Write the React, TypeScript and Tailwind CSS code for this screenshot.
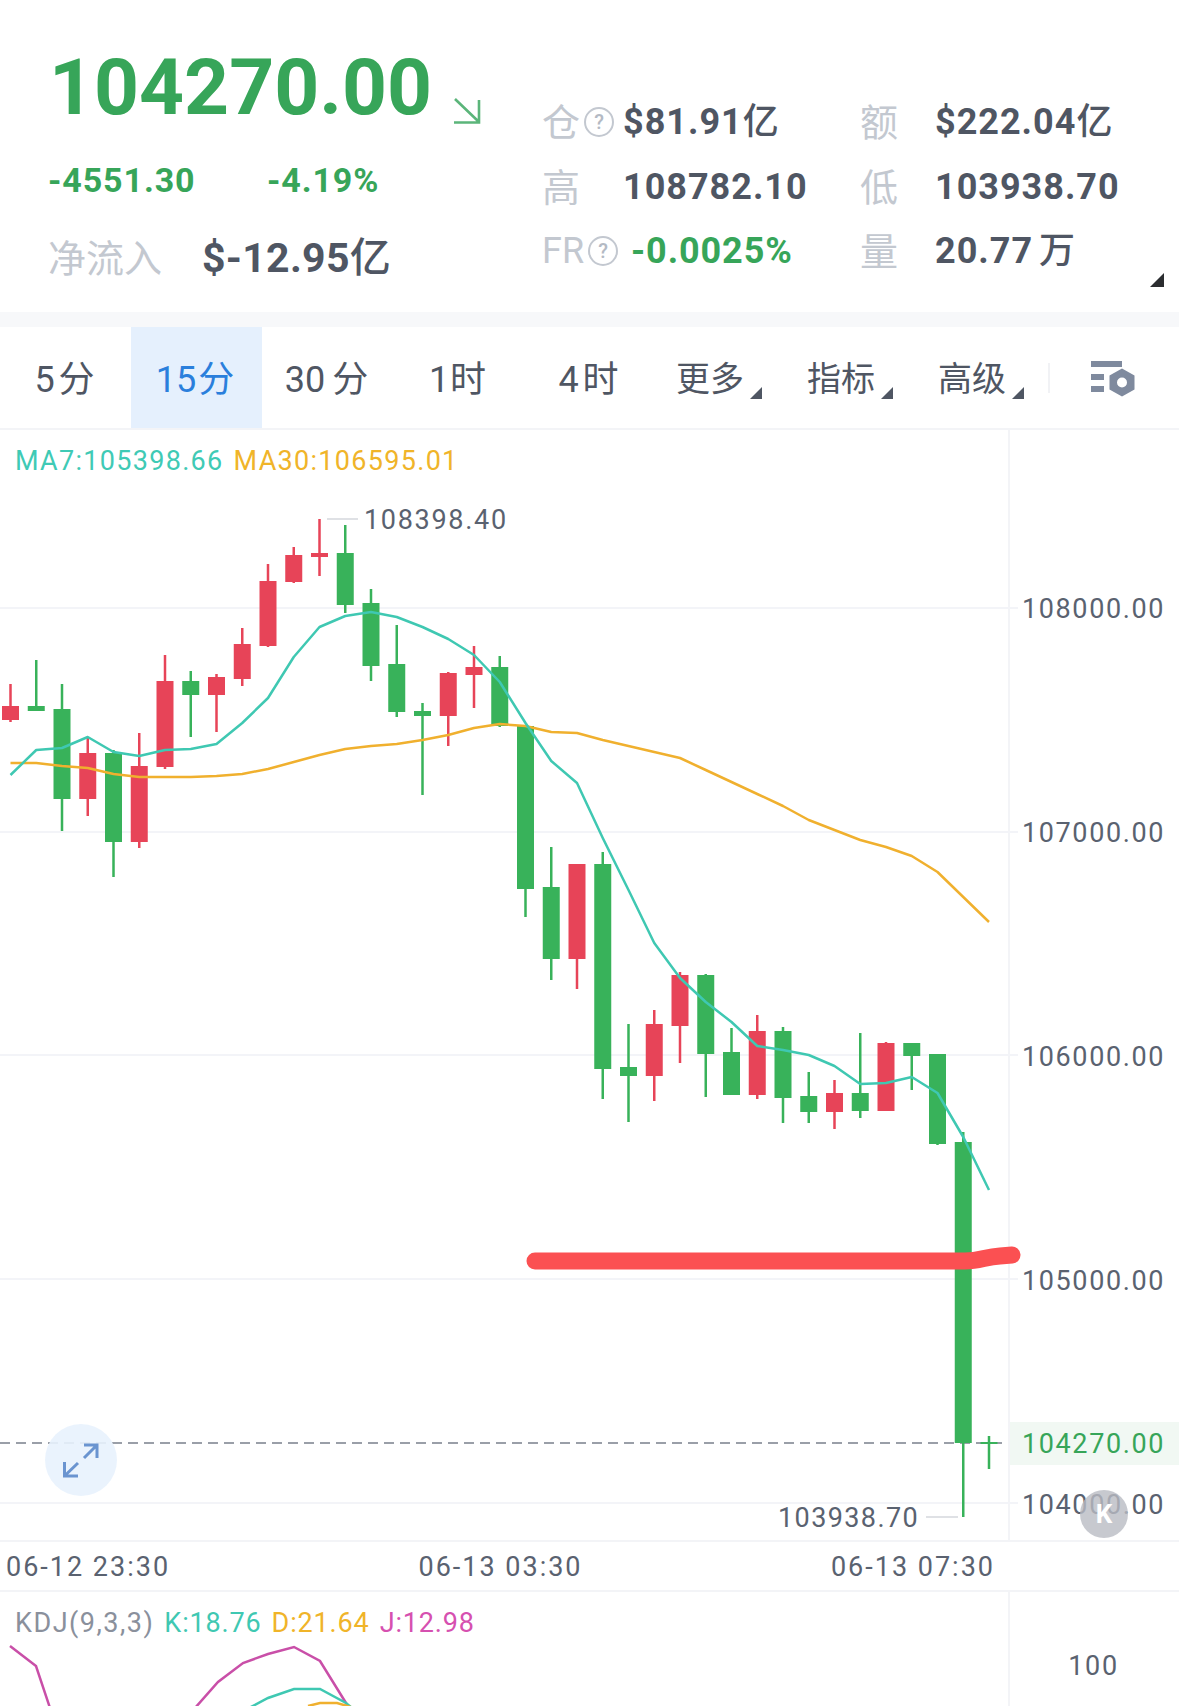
const GREEN = "#38b25a";
const RED = "#e74458";

// [wickTop, wickBottom, bodyTop, bodyBottom, up]
const CANDLES: [number, number, number, number, boolean][] = [
  [684, 722, 706, 720, true],
  [660, 711, 706, 711, false],
  [684, 831, 709, 799, false],
  [738, 816, 753, 799, true],
  [750, 877, 753, 842, false],
  [733, 848, 766, 842, true],
  [655, 769, 681, 767, true],
  [671, 737, 681, 695, false],
  [674, 732, 677, 695, true],
  [628, 686, 644, 679, true],
  [564, 647, 581, 646, true],
  [547, 583, 555, 582, true],
  [519, 576, 553, 557, true],
  [525, 613, 553, 605, false],
  [589, 681, 603, 666, false],
  [625, 717, 664, 712, false],
  [703, 795, 711, 716, false],
  [672, 746, 673, 716, true],
  [646, 708, 667, 675, true],
  [656, 727, 667, 726, false],
  [726, 917, 726, 889, false],
  [847, 980, 887, 959, false],
  [864, 989, 864, 959, true],
  [852, 1099, 864, 1069, false],
  [1024, 1122, 1067, 1076, false],
  [1010, 1101, 1024, 1076, true],
  [972, 1063, 975, 1026, true],
  [974, 1097, 975, 1054, false],
  [1028, 1095, 1052, 1095, false],
  [1015, 1099, 1031, 1095, true],
  [1027, 1123, 1031, 1098, false],
  [1072, 1123, 1096, 1112, false],
  [1080, 1129, 1093, 1112, true],
  [1033, 1118, 1093, 1111, false],
  [1042, 1111, 1043, 1111, true],
  [1043, 1090, 1043, 1056, false],
  [1054, 1145, 1054, 1144, false],
  [1132, 1517, 1142, 1443, false],
  [1436, 1469, 1442, 1444, false],
];

const MA7 = [
  775, 750, 748, 737, 752, 756, 750, 749, 744, 723, 698, 657, 627, 616, 612, 617, 627, 639, 655,
  682, 723, 761, 783, 838, 890, 943, 978, 1002, 1022, 1046, 1050, 1055, 1066, 1084, 1083, 1077,
  1093, 1137, 1190,
];
const MA30 = [
  763, 763, 766, 768, 774, 777, 777, 777, 776, 774, 769, 762, 755, 749, 746, 744, 740, 735, 728,
  724, 726, 732, 733, 740, 746, 752, 758, 770, 782, 794, 806, 820, 830, 840, 847, 856, 872, 897,
  922,
];

const candleX = (i: number) => 10.5 + 25.75 * i;
const linePoints = (ys: number[]) => ys.map((y, i) => `${candleX(i)},${y}`).join(" ");

const AXIS = ["108000.00", "107000.00", "106000.00", "105000.00", "104000.00"];
const GRID = [608, 832, 1055, 1279, 1503];
const TABS = [
  { n: "5", unit: "分", gap: "ml-[4px]" },
  { n: "15", unit: "分", gap: "ml-[2px]" },
  { n: "30", unit: "分", gap: "ml-[7px]" },
  { n: "1", unit: "时", gap: "ml-[1px]" },
  { n: "4", unit: "时", gap: "ml-[4px]" },
];
const MENUS = ["更多", "指标", "高级"];

function Help() {
  return (
    <span className="flex h-[30px] w-[30px] items-center justify-center rounded-full border-[2.5px] border-[#c3c8d0] text-[20px] font-medium text-[#b4bac4]">
      ?
    </span>
  );
}

function Label({ children }: { children: React.ReactNode }) {
  return <span className="pt-[2px] text-[38px] leading-none text-[#c3c8d0]">{children}</span>;
}

function Value({ children }: { children: React.ReactNode }) {
  return (
    <span className="text-[36px] font-bold leading-none tracking-[1px] text-[#4f5663]">
      {children}
    </span>
  );
}

function Unit({ children }: { children: React.ReactNode }) {
  return <span className="font-medium">{children}</span>;
}

function Corner({ color = "#4f5663", size = 12 }: { color?: string; size?: number }) {
  return (
    <svg width={size} height={size} viewBox="0 0 12 12" className="shrink-0">
      <path d="M12 0V12H0Z" fill={color} />
    </svg>
  );
}

export default function App() {
  return (
    <div className="h-[1706px] w-[1179px] overflow-hidden bg-white font-[Roboto,'Noto_Sans_CJK_SC',sans-serif] text-[#4f5663]">
      {/* Ticker header */}
      <header className="relative flex h-[312px]">
        <div className="w-[542px] pl-[47px] pt-[47px]">
          <div className="flex items-start">
            <span className="ml-[2px] text-[78.5px] font-bold leading-[80px] text-[#37a559]">104270.00</span>
            <svg width="30" height="30" viewBox="0 0 30 30" className="ml-[20px] mt-[49px]" fill="none" stroke="#5bb57a" strokeWidth="2.6">
              <path d="M3 3 27 26M27 4V26.5H2" />
            </svg>
          </div>
          <div className="ml-[1px] mt-[33px] flex h-[40px] items-center text-[34px] font-bold tracking-[0.9px] text-[#37a559]">
            <span className="w-[219px]">-4551.30</span>
            <span>-4.19%</span>
          </div>
          <div className="ml-[1px] mt-[37px] flex h-[44px] items-center">
            <span className="w-[154px] text-[38px] text-[#c3c8d0]">净流入</span>
            <span className="text-[41px] font-bold tracking-[0.3px]">
              $-12.95<Unit>亿</Unit>
            </span>
          </div>
        </div>

        <div className="grid h-fit flex-1 grid-cols-[81px_237px_75px_1fr] auto-rows-[64.5px] items-center pt-[90px]">
          <div className="flex items-center gap-[4px]">
            <Label>仓</Label>
            <Help />
          </div>
          <Value>
            $81.91<Unit>亿</Unit>
          </Value>
          <Label>额</Label>
          <Value>
            $222.04<Unit>亿</Unit>
          </Value>

          <Label>高</Label>
          <Value>108782.10</Value>
          <Label>低</Label>
          <Value>103938.70</Value>

          <div className="flex items-center gap-[4px]">
            <span className="text-[36px] leading-none text-[#c3c8d0]">FR</span>
            <Help />
          </div>
          <span className="ml-[8px] text-[36px] font-bold leading-none tracking-[0.9px] text-[#37a559]">
            -0.0025%
          </span>
          <Label>量</Label>
          <Value>
            20.77
            <span className="ml-[6px] font-medium">万</span>
          </Value>
        </div>

        <div className="absolute left-[1150px] top-[273px]">
          <Corner color="#2b2d30" size={14} />
        </div>
      </header>

      <div className="h-[15px] bg-[#f7f8fa]" />

      {/* Interval tabs */}
      <nav className="flex h-[103px] items-stretch border-b-2 border-[#f3f4f7]">
        {TABS.map((tab, i) => (
          <div
            key={tab.n}
            className={
              i === 1
                ? "flex w-[131px] items-center justify-center bg-[#e5f0fd] pr-[3px] pt-[4px] text-[36px] text-[#2a7fdc]"
                : "flex w-[131px] items-center justify-center pr-[2px] pt-[4px] text-[36px] text-[#4f5663]"
            }
          >
            <span>{tab.n}</span>
            <span className={tab.gap}>{tab.unit}</span>
          </div>
        ))}
        {MENUS.map((menu) => (
          <div key={menu} className="flex w-[131px] items-center justify-center pr-[3px] pt-[4px] text-[34px]">
            <span>{menu}</span>
            <span className="ml-[6px] mt-[26px]">
              <Corner />
            </span>
          </div>
        ))}
        <div className="my-auto h-[30px] w-[2px] bg-[#f1f2f5]" />
        <div className="flex flex-1 items-center justify-center pr-[3px] pt-[2px]">
          <svg width="46" height="38" viewBox="0 0 46 38" fill="#7f8a9e">
            <rect x="1" y="1" width="31" height="6" />
            <rect x="1" y="14" width="13" height="6" />
            <rect x="1" y="26" width="13" height="6" />
            <path
              fillRule="evenodd"
              d="M32 8.5 44.5 15.5V29.5L32 36.5 19.5 29.5V15.5ZM32 17.5A5 5 0 1 0 32 27.5 5 5 0 1 0 32 17.5Z"
            />
          </svg>
        </div>
      </nav>

      {/* Price chart */}
      <section className="relative flex h-[1110px]">
        <div className="w-[1010px] border-r-2 border-[#f3f4f7] pl-[15px] pt-[15px]">
          <div className="flex gap-[10px] text-[27px] leading-[32px] tracking-[1.3px]">
            <span className="text-[#3fcab5]">MA7:105398.66</span>
            <span className="text-[#f0b429]">MA30:106595.01</span>
          </div>
        </div>
        <div className="flex-1 pr-[2px] pt-[67px]">
          {AXIS.map((price) => (
            <div key={price} className="flex h-[224px] items-center justify-center text-[27px] tracking-[1.6px] text-[#5a6270]">
              {price}
            </div>
          ))}
        </div>

        <svg width="1179" height="1110" viewBox="0 430 1179 1110" className="absolute inset-0">
          {GRID.map((y) => (
            <line key={y} x1="0" x2="1018" y1={y} y2={y} stroke="#f3f4f8" strokeWidth="2" />
          ))}
          <line x1="0" x2="1006" y1="1443" y2="1443" stroke="#9a9fa8" strokeWidth="2" strokeDasharray="10 6" />
          <line x1="327" x2="358" y1="519" y2="519" stroke="#dfe1e5" strokeWidth="2" />
          <line x1="926" x2="958" y1="1517" y2="1517" stroke="#dfe1e5" strokeWidth="2" />
          {CANDLES.map(([top, bottom, bodyTop, bodyBottom, up], i) => (
            <g key={i} fill={up ? RED : GREEN}>
              <rect x={candleX(i) - 1.25} y={top} width="2.5" height={bottom - top} />
              <rect x={candleX(i) - 8.5} y={bodyTop} width="17" height={bodyBottom - bodyTop} />
            </g>
          ))}
          <polyline points={linePoints(MA30)} fill="none" stroke="#f0b02e" strokeWidth="2.5" strokeLinejoin="round" />
          <polyline points={linePoints(MA7)} fill="none" stroke="#3fc8b2" strokeWidth="2.5" strokeLinejoin="round" />
          <path
            d="M535 1261 L965 1261 C980 1261 985 1257 1000 1256 L1012 1255"
            fill="none"
            stroke="#fb5052"
            strokeWidth="17"
            strokeLinecap="round"
          />
        </svg>

        <span className="absolute left-[364px] top-[73px] text-[27px] leading-[34px] tracking-[1.7px] text-[#5a6270]">
          108398.40
        </span>
        <span className="absolute left-[778px] top-[1071px] text-[27px] leading-[34px] tracking-[1.4px] text-[#5a6270]">
          103938.70
        </span>
        <div className="absolute left-[1010px] top-[992px] flex h-[43px] w-[169px] items-center justify-center bg-[#f1f8f3] pr-[2px] pt-[1px] text-[27px] tracking-[1.6px] text-[#37a559]">
          104270.00
        </div>
        <div className="absolute left-[45px] top-[994px] flex h-[72px] w-[72px] items-center justify-center rounded-full bg-[#e8f2fd]/90">
          <svg width="36" height="36" viewBox="0 0 36 36" fill="none" stroke="#6a94d0" strokeWidth="3">
            <path d="M21 3H34V16M33 4 21 16M1.5 20V34H15M2.5 33 15 21" />
          </svg>
        </div>
        <div className="absolute left-[1080px] top-[1060px] flex h-[48px] w-[48px] items-center justify-center rounded-full bg-[#b9bcc3]/80 text-[26px] font-bold text-white">
          K
        </div>
      </section>

      {/* Time axis */}
      <div className="flex h-[52px] items-center justify-between border-y-2 border-[#f3f4f7] pl-[6px] pr-[184px] pt-[2px] text-[27px] tracking-[2px] text-[#5a6270]">
        <span>06-12 23:30</span>
        <span>06-13 03:30</span>
        <span>06-13 07:30</span>
      </div>

      {/* KDJ panel */}
      <section className="relative flex h-[114px]">
        <div className="w-[1010px] border-r-2 border-[#f3f4f7] pl-[15px] pt-[15px]">
          <div className="flex gap-[10px] text-[27px] leading-[32px] tracking-[0.85px]">
            <span className="tracking-[1.5px] text-[#8a909c]">KDJ(9,3,3)</span>
            <span className="text-[#3fc8b2]">K:18.76</span>
            <span className="text-[#f0b429]">D:21.64</span>
            <span className="text-[#d650b0]">J:12.98</span>
          </div>
        </div>
        <div className="flex-1 pr-[2px] pt-[56px] text-center text-[27px] leading-[36px] tracking-[1.6px] text-[#5a6270]">
          100
        </div>
        <svg width="1008" height="114" viewBox="0 1592 1008 114" className="absolute inset-0" fill="none" strokeWidth="2.5">
          <polyline points="10,1646 36,1666 50,1708" stroke="#c94fa8" />
          <polyline points="195,1708 218,1682 243,1663 268,1654 294,1647 320,1661 346,1703 349,1708" stroke="#c94fa8" />
          <polyline points="249,1708 268,1698 294,1689 320,1689 346,1703 352,1708" stroke="#3fc8b2" />
          <polyline points="308,1706 320,1703 337,1703 354,1708" stroke="#f0b02e" />
        </svg>
      </section>
    </div>
  );
}
